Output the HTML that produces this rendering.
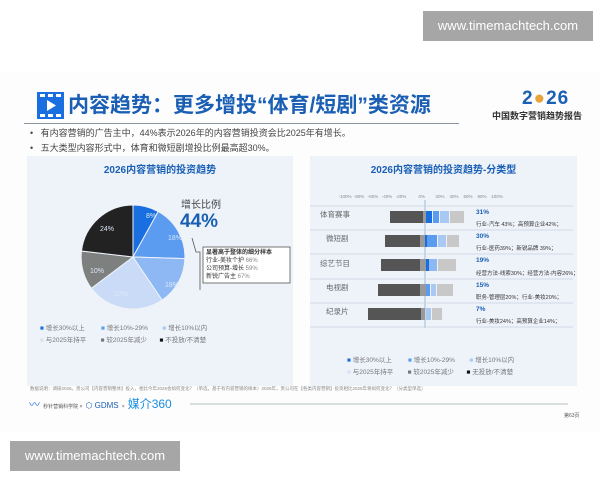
<!DOCTYPE html>
<html><head><meta charset="utf-8"><style>
*{margin:0;padding:0;box-sizing:border-box}
body{width:600px;height:480px;background:#fff;position:relative;overflow:hidden;font-family:"Liberation Sans","Noto Sans CJK SC",sans-serif}
.a{position:absolute;white-space:nowrap;line-height:1.2}
.wm{background:#a6a6a6;color:#fff;font-size:13px;text-align:center;line-height:30px}
</style></head><body>
<div class="a" style="left:0;top:72px;width:600px;height:360px;background:#fdfdfe"></div>
<div class="a wm" style="left:423px;top:11px;width:170px;height:30px">www.timemachtech.com</div>
<div class="a wm" style="left:10px;top:441px;width:170px;height:30px">www.timemachtech.com</div>

<svg class="a" style="left:37px;top:92px" width="27" height="27" viewBox="0 0 27 27"><rect width="27" height="27" fill="#1a6fe0"/><g fill="#fff"><rect x="3" y="2" width="5" height="3"/><rect x="11" y="2" width="5" height="3"/><rect x="19" y="2" width="5" height="3"/><rect x="3" y="22" width="5" height="3"/><rect x="11" y="22" width="5" height="3"/><rect x="19" y="22" width="5" height="3"/><path d="M10 8 L19 13.5 L10 19Z"/></g></svg>
<div class="a" style="left:68px;top:93px;font-size:21px;font-weight:bold;color:#1a5fb4">内容趋势：更多增投“体育/短剧”类资源</div>
<div class="a" style="left:24px;top:123px;width:435px;height:1px;background:#8a93a0"></div>
<div class="a" style="left:522px;top:88px;font-size:19px;font-weight:bold;color:#1a5fb4;letter-spacing:1px">2<span style="color:#e8a33c">●</span>26</div>
<div class="a" style="left:492px;top:111px;font-size:9px;font-weight:bold;color:#333">中国数字营销趋势报告</div>
<div class="a" style="left:30px;top:128px;font-size:9px;color:#444">•&nbsp;&nbsp; 有内容营销的广告主中，44%表示2026年的内容营销投资会比2025年有增长。</div>
<div class="a" style="left:30px;top:143px;font-size:9px;color:#444">•&nbsp;&nbsp; 五大类型内容形式中，体育和微短剧增投比例最高超30%。</div>

<div class="a" style="left:27px;top:156px;width:266px;height:230px;background:#eef3fa"></div>
<div class="a" style="left:310px;top:156px;width:267px;height:230px;background:#eef3fa"></div>
<div class="a" style="left:27px;top:165px;width:266px;text-align:center;font-size:10px;font-weight:bold;color:#1a5fb4">2026内容营销的投资趋势</div>
<div class="a" style="left:310px;top:165px;width:267px;text-align:center;font-size:10px;font-weight:bold;color:#1a5fb4">2026内容营销的投资趋势-分类型</div>

<svg class="a" style="left:0;top:0" width="600" height="480">
<g stroke="#eef3fa" stroke-width="1">
<path d="M133 257 L133 205 A52 52 0 0 1 158.2 211.5Z" fill="#1a6fe0"/>
<path d="M133 257 L158.2 211.5 A52 52 0 0 1 184.9 258.6Z" fill="#5b9bf0"/>
<path d="M133 257 L184.9 258.6 A52 52 0 0 1 162.1 300.1Z" fill="#8db8f3"/>
<path d="M133 257 L162.1 300.1 A52 52 0 0 1 91.4 288.3Z" fill="#c9dbf6"/>
<path d="M133 257 L91.4 288.3 A52 52 0 0 1 81.5 251.0Z" fill="#7e807f"/>
<path d="M133 257 L81.5 251.0 A52 52 0 0 1 133 205Z" fill="#222"/>
</g>
<g font-size="7" fill="#dde8f8" font-family="Liberation Sans"><text x="146" y="218">8%</text><text x="168" y="240">18%</text><text x="165" y="287">18%</text><text x="114" y="296">22%</text><text x="90" y="273">10%</text><text x="100" y="231">24%</text></g>
<path d="M192 238 L196 252 L200 252 L200 290" stroke="#555" fill="none" stroke-width="0.8"/>
<rect x="203" y="247" width="87" height="36" fill="#fff" stroke="#555" stroke-width="0.8"/>
<line x1="425" y1="200" x2="425" y2="328" stroke="#6a8fc5" stroke-width="0.6"/>
<g stroke="#c8d2de" stroke-width="0.8"><line x1="310" y1="206" x2="573" y2="206"/><line x1="310" y1="230" x2="573" y2="230"/><line x1="310" y1="254" x2="573" y2="254"/><line x1="310" y1="279" x2="573" y2="279"/><line x1="310" y1="303" x2="573" y2="303"/><line x1="310" y1="327" x2="573" y2="327"/></g>
<g>
<rect x="390" y="211" width="33" height="12" fill="#555"/><rect x="423" y="211" width="3" height="12" fill="#999"/><rect x="426" y="211" width="6" height="12" fill="#1a6fe0"/><rect x="433" y="211" width="6" height="12" fill="#5b9bf0"/><rect x="440" y="211" width="9" height="12" fill="#a9c8f2"/><rect x="450" y="211" width="14" height="12" fill="#c8c8c8"/>
<rect x="385" y="235" width="35" height="12" fill="#555"/><rect x="420" y="235" width="5" height="12" fill="#999"/><rect x="425" y="235" width="2" height="12" fill="#1a6fe0"/><rect x="427" y="235" width="10" height="12" fill="#5b9bf0"/><rect x="438" y="235" width="8" height="12" fill="#a9c8f2"/><rect x="447" y="235" width="12" height="12" fill="#c8c8c8"/>
<rect x="381" y="259" width="39" height="12" fill="#555"/><rect x="420" y="259" width="6" height="12" fill="#999"/><rect x="426" y="259" width="3" height="12" fill="#1a6fe0"/><rect x="429" y="259" width="8" height="12" fill="#8db8f3"/><rect x="438" y="259" width="18" height="12" fill="#c8c8c8"/>
<rect x="378" y="284" width="42" height="12" fill="#555"/><rect x="420" y="284" width="6" height="12" fill="#999"/><rect x="426" y="284" width="4" height="12" fill="#5b9bf0"/><rect x="431" y="284" width="5" height="12" fill="#a9c8f2"/><rect x="437" y="284" width="16" height="12" fill="#c8c8c8"/>
<rect x="368" y="308" width="53" height="12" fill="#555"/><rect x="421" y="308" width="4" height="12" fill="#999"/><rect x="426" y="308" width="5" height="12" fill="#a9c8f2"/><rect x="432" y="308" width="10" height="12" fill="#c8c8c8"/>
</g>
<g font-size="4.5" fill="#888" font-family="Liberation Sans" text-anchor="middle"><text x="345" y="198">-100%</text><text x="359" y="198">-80%</text><text x="373" y="198">-60%</text><text x="387" y="198">-40%</text><text x="401" y="198">-20%</text><text x="425" y="198" text-anchor="end">0%</text><text x="440" y="198">20%</text><text x="454" y="198">40%</text><text x="468" y="198">60%</text><text x="482" y="198">80%</text><text x="497" y="198">100%</text></g>
<g font-size="7.5" fill="#666"><text x="320" y="217">体育赛事</text><text x="326" y="241">微短剧</text><text x="320" y="266">综艺节目</text><text x="326" y="290">电视剧</text><text x="326" y="314">纪录片</text></g>
<g font-size="6.5" fill="#1a5fb4" font-weight="bold"><text x="476" y="214">31%</text><text x="476" y="238">30%</text><text x="476" y="262">19%</text><text x="476" y="287">15%</text><text x="476" y="311">7%</text></g>
<g font-size="5.5" fill="#333"><text x="476" y="226">行业-汽车 43%；高预算企业42%；</text><text x="476" y="250">行业-医药39%；新锐品牌 39%；</text><text x="476" y="275">经营方法-线索30%；经营方法-内容26%；</text><text x="476" y="299">职务-管理层20%；行业-美妆20%；</text><text x="476" y="323">行业-美妆24%；高预算企业14%；</text></g>
<line x1="190" y1="404" x2="568" y2="404" stroke="#9aa" stroke-width="0.8"/>
</svg>
<div class="a" style="left:181px;top:200px;font-size:10px;line-height:11px;color:#444">增长比例</div>
<div class="a" style="left:180px;top:212px;font-size:19px;line-height:19px;font-weight:bold;color:#1a5fb4">44%</div>
<div class="a" style="left:206px;top:249px;font-size:6px;line-height:8px;color:#333"><b>显著高于整体的细分样本</b><br>行业-美妆个护 <span style="color:#888">66%</span><br>公司预算-增长 <span style="color:#888">59%</span><br>新锐广告主 <span style="color:#888">67%</span></div>
<div class="a" style="left:40px;top:323px;font-size:6.5px;line-height:12px;color:#777"><span style="color:#1a6fe0">■</span> 增长30%以上&nbsp;&nbsp;&nbsp;&nbsp;&nbsp;&nbsp;&nbsp;&nbsp;&nbsp;<span style="color:#5b9bf0">■</span> 增长10%-29%&nbsp;&nbsp;&nbsp;&nbsp;&nbsp;&nbsp;&nbsp;&nbsp;<span style="color:#a9c8f2">■</span> 增长10%以内<br><span style="color:#d5e2f5">■</span> 与2025年持平&nbsp;&nbsp;&nbsp;&nbsp;&nbsp;&nbsp;&nbsp;&nbsp;<span style="color:#777">■</span> 较2025年减少&nbsp;&nbsp;&nbsp;&nbsp;&nbsp;&nbsp;&nbsp;<span style="color:#111">■</span> 不投放/不清楚</div>
<div class="a" style="left:347px;top:355px;font-size:6.5px;line-height:12px;color:#777"><span style="color:#1a6fe0">■</span> 增长30%以上&nbsp;&nbsp;&nbsp;&nbsp;&nbsp;&nbsp;&nbsp;&nbsp;&nbsp;<span style="color:#5b9bf0">■</span> 增长10%-29%&nbsp;&nbsp;&nbsp;&nbsp;&nbsp;&nbsp;&nbsp;&nbsp;<span style="color:#a9c8f2">■</span> 增长10%以内<br><span style="color:#d5e2f5">■</span> 与2025年持平&nbsp;&nbsp;&nbsp;&nbsp;&nbsp;&nbsp;&nbsp;&nbsp;<span style="color:#777">■</span> 较2025年减少&nbsp;&nbsp;&nbsp;&nbsp;&nbsp;&nbsp;&nbsp;<span style="color:#111">■</span> 无投放/不清楚</div>
<div class="a" style="left:30px;top:386px;font-size:4.5px;color:#888">数据说明：调研2026。贵公司【内容营销整体】投入，相比今年2025会如何变化？（单选，基于有内容营销的样本）2026年，贵公司在【各类内容营销】投资相比2025年将如何变化？（分类型单选）</div>
<div class="a" style="left:29px;top:397px;font-size:11px;color:#1a6fe0">〰 <span style="font-size:5px;color:#555">秒针营销科学院 ×</span> <span style="font-size:8px;color:#1a5fb4">⬡ GDMS</span> <span style="font-size:5px;color:#555">×</span> <span style="font-size:12px;color:#1a8fe0">媒介360</span></div>
<div class="a" style="left:564px;top:413px;font-size:5px;color:#555">第63页</div>
</body></html>
